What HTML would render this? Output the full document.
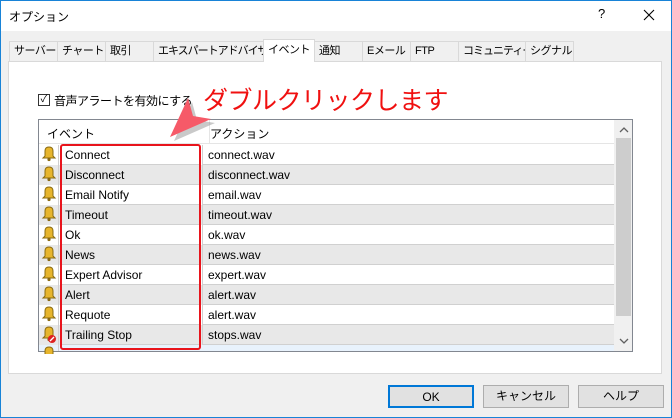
<!DOCTYPE html>
<html><head><meta charset="utf-8"><style>
*{margin:0;padding:0;box-sizing:border-box}
body{width:672px;height:418px;overflow:hidden;background:#f0f0f0;font-family:"Liberation Sans","Noto Sans CJK JP",sans-serif;font-size:12px;color:#000;position:relative}
.win{position:absolute;left:0;top:0;width:672px;height:418px;border:1px solid #1883d7}
.title{position:absolute;left:1px;top:1px;width:670px;height:30px;background:#fff}
.abs{position:absolute;white-space:nowrap}
.tab{position:absolute;top:41px;height:20px;border:1px solid #d9d9d9;border-bottom:none;background:#f0f0f0;font-size:11px;line-height:18px;padding-left:4px;white-space:nowrap;overflow:hidden;letter-spacing:-0.5px}
.panel{position:absolute;left:8px;top:61px;width:654px;height:313px;background:#fff;border:1px solid #d9d9d9}
.list{position:absolute;left:38px;top:119px;width:595px;height:233px;border:1px solid #828790;background:#fff;overflow:hidden}
.row{position:absolute;left:0;width:575px;height:20px;font-size:12px;line-height:20px}
.row.g{background:#e8e8e8}
.row .ic{position:absolute;left:0;width:20px;height:20px;border-right:1px solid #cfcfcf}
.row .ev{position:absolute;left:22px;width:140px;height:20px;padding-left:4px;border-bottom:1px solid #d0d0d0}
.row .ac{position:absolute;left:163px;width:412px;height:20px;padding-left:5px;border-bottom:1px solid #d0d0d0;border-left:1px solid #d0d0d0}
.btn{position:absolute;top:385px;width:86px;height:23px;border:1px solid #adadad;background:#e1e1e1;text-align:center;line-height:21px;font-size:12px}
</style></head><body>
<div class="win"></div>
<div class="title"></div>
<div class="abs" style="left:9px;top:8px;font-size:12px">オプション</div>
<div class="abs" style="left:598px;top:6px;font-size:13px">?</div>
<svg class="abs" style="left:643px;top:9px" width="12" height="12"><path d="M1 1 L11 11 M11 1 L1 11" stroke="#000" stroke-width="1.1"/></svg>

<div class="panel"></div>
<div class="tab" style="left:9px;width:49px">サーバー</div>
<div class="tab" style="left:57px;width:49px">チャート</div>
<div class="tab" style="left:105px;width:49px">取引</div>
<div class="tab" style="left:153px;width:111px;letter-spacing:-1px">エキスパートアドバイザ</div>
<div class="tab" style="left:263px;top:39px;height:23px;width:52px;background:#fff;line-height:20px">イベント</div>
<div class="tab" style="left:314px;width:49px">通知</div>
<div class="tab" style="left:362px;width:49px">Eメール</div>
<div class="tab" style="left:410px;width:49px">FTP</div>
<div class="tab" style="left:458px;width:68px;letter-spacing:-1px">コミュニティー</div>
<div class="tab" style="left:525px;width:49px">シグナル</div>

<div class="abs" style="left:38px;top:94px;width:12px;height:12px;border:1px solid #333;background:#fff;font-size:10px;line-height:10px;text-align:center">✓</div>
<div class="abs" style="left:54px;top:92px;letter-spacing:-0.5px">音声アラートを有効にする</div>
<div class="abs" style="left:203px;top:81px;font-size:25px;color:#f01010;letter-spacing:-0.5px">ダブルクリックします</div>

<div class="list">
 <div class="abs" style="left:0;top:0;width:575px;height:24px;border-bottom:1px solid #e5e5e5"></div>
 <div class="abs" style="left:8px;top:5px">イベント</div>
 <div class="abs" style="left:170px;top:0;width:1px;height:24px;background:#e5e5e5"></div>
 <div class="abs" style="left:171px;top:5px">アクション</div>
 <div class="row" style="top:25px"><div class="ic"></div><div class="ev">Connect</div><div class="ac">connect.wav</div></div>
 <div class="row g" style="top:45px"><div class="ic"></div><div class="ev">Disconnect</div><div class="ac">disconnect.wav</div></div>
 <div class="row" style="top:65px"><div class="ic"></div><div class="ev">Email Notify</div><div class="ac">email.wav</div></div>
 <div class="row g" style="top:85px"><div class="ic"></div><div class="ev">Timeout</div><div class="ac">timeout.wav</div></div>
 <div class="row" style="top:105px"><div class="ic"></div><div class="ev">Ok</div><div class="ac">ok.wav</div></div>
 <div class="row g" style="top:125px"><div class="ic"></div><div class="ev">News</div><div class="ac">news.wav</div></div>
 <div class="row" style="top:145px"><div class="ic"></div><div class="ev">Expert Advisor</div><div class="ac">expert.wav</div></div>
 <div class="row g" style="top:165px"><div class="ic"></div><div class="ev">Alert</div><div class="ac">alert.wav</div></div>
 <div class="row" style="top:185px"><div class="ic"></div><div class="ev">Requote</div><div class="ac">alert.wav</div></div>
 <div class="row g" style="top:205px"><div class="ic"></div><div class="ev">Trailing Stop</div><div class="ac">stops.wav</div></div>
 <div class="row" style="top:225px;background:#e8f2fc"><div class="ic"></div></div>
 <div class="abs" style="left:575px;top:0;width:18px;height:231px;background:#f0f0f0"></div>
 <div class="abs" style="left:577px;top:18px;width:15px;height:178px;background:#cdcdcd"></div>
 <svg class="abs" style="left:580px;top:6px" width="10" height="8"><path d="M1 6 L5 2 L9 6" stroke="#606060" fill="none" stroke-width="1.3"/></svg>
 <svg class="abs" style="left:580px;top:217px" width="10" height="8"><path d="M1 2 L5 6 L9 2" stroke="#606060" fill="none" stroke-width="1.3"/></svg>
</div>
<svg class="abs" style="left:39px;top:144px" width="20" height="210">
 <defs><g id="b"><path d="M4 14 L6 12 L6 7 Q6 3 10 3 Q14 3 14 7 L14 12 L16 14 Z" fill="#e7b52c" stroke="#8a6a10" stroke-width="1"/><circle cx="10" cy="15.5" r="1.6" fill="#8a6a10"/></g></defs>
 <use href="#b" y="0"/><use href="#b" y="20"/><use href="#b" y="40"/><use href="#b" y="60"/><use href="#b" y="80"/><use href="#b" y="100"/><use href="#b" y="120"/><use href="#b" y="140"/><use href="#b" y="160"/><use href="#b" y="180"/><use href="#b" y="200"/>
 <circle cx="13" cy="195" r="4" fill="#d22"/><path d="M11 197 L15 193" stroke="#fff" stroke-width="1.3"/>
</svg>
<div class="abs" style="left:60px;top:144px;width:141px;height:206px;border:2px solid #e8141c;border-radius:3px"></div>
<svg class="abs" style="left:160px;top:90px" width="60" height="55">
 <polygon points="30,10 35,28 53,31 12,49" fill="#888" opacity="0.45" transform="translate(2,2)"/>
 <polygon points="28,8 33,26 51,29 10,47" fill="#f65a68"/>
</svg>

<div class="btn" style="left:388px;border:2px solid #0078d7">OK</div>
<div class="btn" style="left:483px">キャンセル</div>
<div class="btn" style="left:578px">ヘルプ</div>
</body></html>
